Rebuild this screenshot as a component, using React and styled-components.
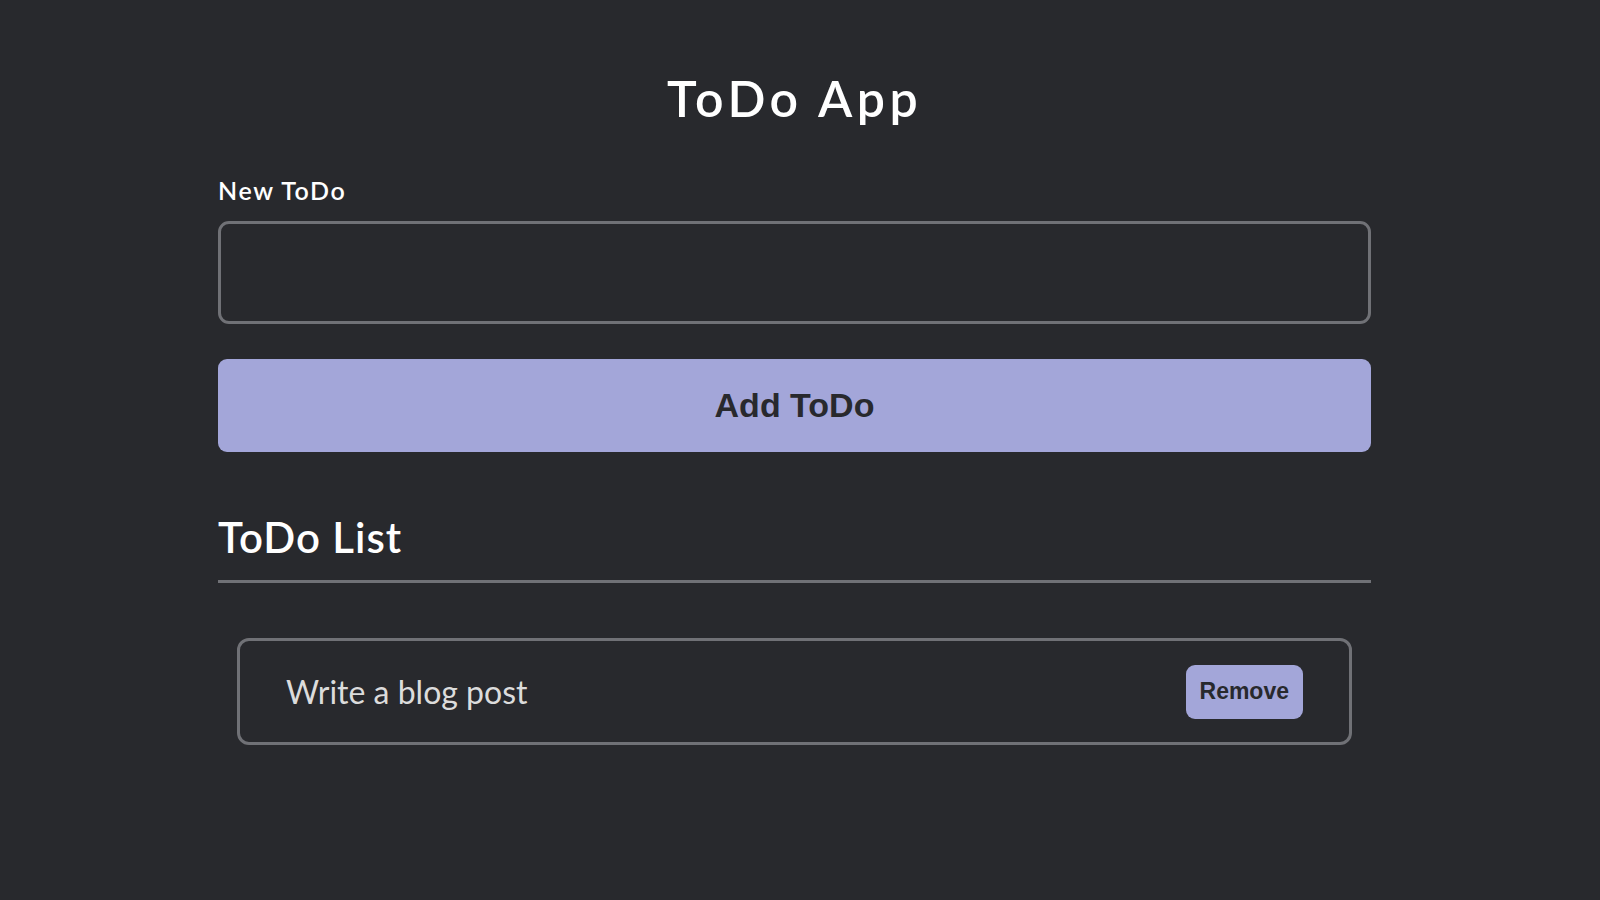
import styled, { createGlobalStyle } from 'styled-components';

const GlobalStyle = createGlobalStyle`
  html, body {
    margin: 0;
    padding: 0;
    background-color: #28292d;
  }

  body {
    font-family: 'Lato', 'Noto Sans', sans-serif;
    color: #ffffff;
  }
`;

const Page = styled.div`
  min-height: 900px;
  background-color: #28292d;
  padding-top: 68px;
  box-sizing: border-box;
`;

const Container = styled.main`
  width: 1153px;
  margin-left: 218px;
  display: flex;
  flex-direction: column;
`;

const Title = styled.h1`
  margin: 0 0 47px;
  font-size: 50px;
  font-weight: 600;
  line-height: 60px;
  text-align: center;
  letter-spacing: 4.5px;
`;

const Label = styled.label`
  font-size: 25px;
  font-weight: 600;
  line-height: 30px;
  letter-spacing: 1.6px;
  margin-bottom: 16px;
`;

const Input = styled.input`
  box-sizing: border-box;
  width: 100%;
  height: 103px;
  margin: 0 0 35px;
  padding: 0 24px;
  background: transparent;
  border: 3px solid #707176;
  border-radius: 11px;
  color: #ffffff;
  font-size: 28px;
  font-family: 'Lato', sans-serif;
  outline: none;
`;

const Button = styled.button`
  border: none;
  cursor: pointer;
  background-color: #a3a6d9;
  color: #28292d;
  font-family: 'Liberation Sans', Arial, sans-serif;
  font-weight: 700;
  border-radius: 9px;
  font-size: ${({ $small }) => ($small ? '23px' : '34px')};
  height: ${({ $small }) => ($small ? '54px' : '93px')};
  padding: ${({ $small }) => ($small ? '0 14px' : '0')};
  width: ${({ $small }) => ($small ? 'auto' : '100%')};
`;

const ListTitle = styled.h2`
  margin: 60px 0 0;
  padding-bottom: 18px;
  font-size: 42px;
  font-weight: 600;
  line-height: 50px;
  letter-spacing: 1px;
  border-bottom: 3px solid #707176;
`;

const List = styled.ul`
  list-style: none;
  margin: 55px 0 0;
  padding: 0 19px 0 19px;
`;

const Item = styled.li`
  box-sizing: border-box;
  height: 107px;
  display: flex;
  align-items: center;
  justify-content: space-between;
  padding: 0 46px;
  border: 3px solid #707176;
  border-radius: 12px;
`;

const ItemText = styled.span`
  font-size: 32px;
  font-weight: 400;
  color: #dcdcdc;
`;

const App = () => {
  return (
    <>
      <GlobalStyle />
      <Page>
        <Container>
          <Title>ToDo App</Title>
          <Label htmlFor="new-todo">New ToDo</Label>
          <Input id="new-todo" type="text" />
          <Button>Add ToDo</Button>
          <ListTitle>ToDo List</ListTitle>
          <List>
            <Item>
              <ItemText>Write a blog post</ItemText>
              <Button $small>Remove</Button>
            </Item>
          </List>
        </Container>
      </Page>
    </>
  );
};

export default App;
